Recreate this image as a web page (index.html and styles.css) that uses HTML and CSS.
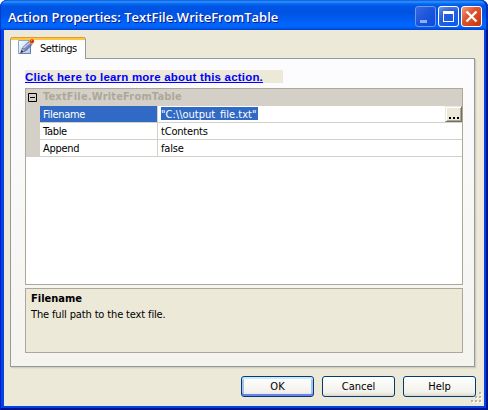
FILE: index.html
```html
<!DOCTYPE html>
<html lang="en">
<head>
<meta charset="utf-8">
<title>Action Properties: TextFile.WriteFromTable</title>
<link rel="stylesheet" href="styles.css">
</head>
<body>
<div class="window">
  <header class="titlebar">
    <h1>Action Properties: TextFile.WriteFromTable</h1>
    <div class="controls">
      <span class="control minimize"><svg width="21" height="21"><path d="M5 14h7v3H5z" fill="#92adf8"/></svg></span>
      <span class="control maximize"><svg width="21" height="21"><path d="M5 5h11v11H5z M6 8v7h9V8z" fill="#fff" fill-rule="evenodd"/></svg></span>
      <span class="control close"><svg width="21" height="21"><path d="M5.5 5.5l10 10M15.5 5.5l-10 10" stroke="#fff" stroke-width="2.4"/></svg></span>
    </div>
  </header>
  <main class="body">
    <div class="tab">
      <svg class="tab-icon" width="17" height="17" viewBox="0 0 17 17">
        <defs><linearGradient id="paper" x2="1" y2="1"><stop stop-color="#fff"/><stop offset="1" stop-color="#a9cbf5"/></linearGradient></defs>
        <path d="M.5 1.5h12v13H.5z" fill="url(#paper)" stroke="#8aa5cf"/>
        <path d="M1 14.5h11.500V7" fill="none" stroke="#6780b0"/>
        <path d="M3.200 13l1.300-4L10.800 2.800l3.200 2.700L7.500 12z" fill="#7b88c4" stroke="#3b4679" stroke-width=".8"/>
        <path d="M5.500 9L11.800 3.500" stroke="#cbd4f4" stroke-width="1.200"/>
        <path d="M2.800 13.500l1.500-4 2.700 2.400z" fill="#d8ae79"/><path d="M2.300 14l1.400-3 1.900 1.900z" fill="#27283b"/>
        <path d="M10.500 2.800l1.500-1.500 3.300 2.700-1.500 1.700z" fill="#edb642"/>
        <circle cx="14" cy="2.300" r="2.100" fill="#d3320d"/><circle cx="13.500" cy="1.700" r=".7" fill="#ff8c54"/>
      </svg>
      <span class="tab-label">Settings</span>
    </div>
    <section class="panel">
      <div class="learn"><a>Click here to learn more about this action.</a></div>
      <div class="grid">
        <div class="category">
          <svg class="toggle" width="9" height="9"><path d="M.5.5h8v8h-8z M2 4.500h5" fill="none" stroke="#000"/></svg>
          <b>TextFile.WriteFromTable</b>
        </div>
        <div class="row selected">
          <div class="name">Filename</div>
          <div class="value"><span class="highlight">"C:\\output_file.txt"</span><span class="browse"><i></i><i></i><i></i></span></div>
        </div>
        <div class="row">
          <div class="name">Table</div>
          <div class="value">tContents</div>
        </div>
        <div class="row">
          <div class="name">Append</div>
          <div class="value">false</div>
        </div>
      </div>
      <div class="description">
        <b>Filename</b>
        <p>The full path to the text file.</p>
      </div>
    </section>
    <footer class="buttons">
      <span class="button default">OK</span>
      <span class="button">Cancel</span>
      <span class="button">Help</span>
    </footer>
  </main>
  <svg class="grip" width="12" height="12"><path d="M9 1h2v2H9zM5 5h2v2H5zM9 5h2v2H9zM1 9h2v2H1zM5 9h2v2H5zM9 9h2v2H9z" fill="#fff"/><path d="M8 0h2v2H8zM4 4h2v2H4zM8 4h2v2H8zM0 8h2v2H0zM4 8h2v2H4zM8 8h2v2H8z" fill="#b8b4a2"/></svg>
</div>
</body>
</html>
```
FILE: styles.css
```css
* { box-sizing: border-box; }
body { margin: 0; background: #fff; font: 11px/14px "DejaVu Sans Condensed", "DejaVu Sans", sans-serif; font-stretch: condensed; color: #000; }
.window {
  position: relative; width: 488px; height: 410px; overflow: hidden;
  padding: 0 4px 4px; border-radius: 7px 7px 0 0; background: #0144e2;
  box-shadow: inset 1px 0 #0019cf, inset -2px 0 #00138c, inset 0 -2px #00138c;
}
.titlebar {
  display: flex; justify-content: space-between; margin: 0 -4px; height: 30px; padding: 6px 6px 0 8px;
  border-radius: 7px 7px 0 0;
  background: linear-gradient(#0059df 0, #3d95ff 2px, #0974f5 3px, #0055e5 6px, #0053e1 13px, #005ef5 20px, #0068ff 26px, #005bf0 28px, #003fc8 30px);
  box-shadow: inset 1px 0 #003dcd, inset -2px 0 #0030b4;
}
h1 { margin: 0; font: 600 13px/22px "Open Sans", sans-serif; letter-spacing: .03px; color: #fff; text-shadow: 1px 1px #0a1883; white-space: nowrap; }
.controls { display: flex; gap: 2px; }
.control { width: 21px; height: 21px; border: 1px solid #fff; border-radius: 3px; background: radial-gradient(circle at 75% 90%, #0c5af4, #285fd9 60%, #6f98ed); }
.control svg { display: block; margin: -1px; }
.minimize { border-color: #7295ec; background: linear-gradient(135deg, #376ae0, #1b55dc 50%, #0a4ddc); }
.close { background: linear-gradient(135deg, #ed9a84, #e2532e 40%, #c83409); }
.body { height: 376px; padding: 7px 0 0 6px; background: #ece9d8; }
.tab {
  position: relative; z-index: 1; display: flex; width: 76px; height: 22px; padding-left: 7px;
  border: 1px solid #919b9c; border-top: 0; border-bottom: 0; border-radius: 3px 3px 0 0;
  background: linear-gradient(#e5972d 0 1px, #ffc73c 1px 3px, #fefefe 3px);
}
.tab-icon { flex: none; margin-top: 2px; }
.tab-label { margin: 5px 0 0 5px; letter-spacing: -.5px; white-space: nowrap; }
.panel {
  width: 465px; height: 309px; margin-top: -1px; padding: 11px 11px 0 14px; border: 1px solid #919b9c;
  background: linear-gradient(#fcfcfe, #f4f3ee); box-shadow: 1px 1px #d0cebf, 2px 2px #e3e0cf;
}
.learn { width: 258px; height: 13px; background: #ece9d8; white-space: nowrap; }
.learn a { display: block; width: 238px; height: 13px; border-bottom: 1px solid #00f; font: 700 11.5px/14px "Liberation Sans", sans-serif; letter-spacing: .2px; color: #00f; }
.grid { width: 438px; height: 197px; margin-top: 5px; border: 1px solid #aca899; background: #fff; }
.category { display: flex; height: 17px; padding-left: 2px; background: #d4d0c8; color: #aca899; }
.category b { margin: 1px 0 0 6px; letter-spacing: .18px; }
.toggle { margin-top: 4px; }
.row { display: flex; height: 17px; border-left: 14px solid #d4d0c8; white-space: nowrap; }
.name { width: 118px; padding: 2px 0 0 3px; border-right: 1px solid #d4d0c8; border-bottom: 1px solid #d4d0c8; letter-spacing: -.3px; }
.value { display: flex; flex: 1; padding: 2px 0 0 3px; border-bottom: 1px solid #d4d0c8; letter-spacing: -.2px; }
.selected .name { background: #316ac5; color: #fff; }
.selected .value { padding-top: 1px; }
.highlight { width: 97px; height: 13px; line-height: 15px; letter-spacing: 0; background: #316ac5; color: #fff; }
.browse { display: flex; justify-content: center; align-items: flex-end; gap: 2px; width: 17px; height: 16px; margin: -1px 0 0 auto; padding: 0 0 2px 1px; border: 1px solid; border-color: #ece9d8 #716f64 #716f64 #ece9d8; background: #ece9d8; box-shadow: inset 1px 1px #fff, inset -1px -1px #aca899; }
.browse i { width: 2px; height: 2px; background: #000; }
.description { width: 438px; height: 65px; margin-top: 3px; padding: 3px 5px; border: 1px solid #aca899; background: #ece9d8; }
.description b { display: block; }
.description p { margin: 2px 0 0; letter-spacing: -.14px; }
.buttons { display: flex; justify-content: flex-end; gap: 8px; padding: 9px 8px 0 0; }
.button { width: 73px; height: 21px; border: 1px solid #003c74; border-radius: 3px; background: linear-gradient(#fff, #f2f1eb 80%, #dcd8cd); text-align: center; line-height: 20px; }
.default { box-shadow: inset 0 2px #cee7ff, inset 0 -2px #6982ee, inset 2px 0 #a5c1f2, inset -2px 0 #a5c1f2; }
.grip { position: absolute; right: 5px; bottom: 6px; }
```
